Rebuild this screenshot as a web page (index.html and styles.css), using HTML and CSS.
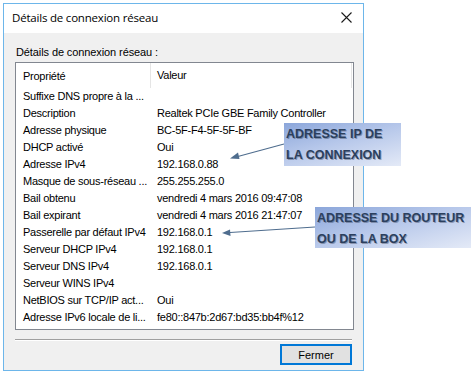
FILE: index.html
```html
<!DOCTYPE html>
<html lang="fr">
<head>
    <meta charset="UTF-8">
    <title>Détails de connexion réseau</title>
    <link rel="stylesheet" href="styles.css">
</head>
<body>

    <!-- Dialog window -->
    <div class="window">
        <div class="titlebar">
            <span class="title">Détails de connexion réseau</span>
            <svg class="close" width="11" height="11" viewBox="0 0 11 11">
                <path d="M0.5 0.5 L10.5 10.5 M10.5 0.5 L0.5 10.5" stroke="#1a1a1a" stroke-width="1.1" fill="none"/>
            </svg>
        </div>

        <div class="content">
            <div class="label">Détails de connexion réseau :</div>

            <div class="listview">
                <div class="head">
                    <div class="col1">Propriété</div>
                    <div class="col2">Valeur</div>
                    <div class="col3"></div>
                </div>
                <div class="row"><div class="col1">Suffixe DNS propre à la ...</div><div class="col2"></div></div>
                <div class="row"><div class="col1">Description</div><div class="col2">Realtek PCIe GBE Family Controller</div></div>
                <div class="row"><div class="col1">Adresse physique</div><div class="col2">BC-5F-F4-5F-5F-BF</div></div>
                <div class="row"><div class="col1">DHCP activé</div><div class="col2">Oui</div></div>
                <div class="row"><div class="col1">Adresse IPv4</div><div class="col2">192.168.0.88</div></div>
                <div class="row"><div class="col1">Masque de sous-réseau ...</div><div class="col2">255.255.255.0</div></div>
                <div class="row"><div class="col1">Bail obtenu</div><div class="col2">vendredi 4 mars 2016 09:47:08</div></div>
                <div class="row"><div class="col1">Bail expirant</div><div class="col2">vendredi 4 mars 2016 21:47:07</div></div>
                <div class="row"><div class="col1">Passerelle par défaut IPv4</div><div class="col2">192.168.0.1</div></div>
                <div class="row"><div class="col1">Serveur DHCP IPv4</div><div class="col2">192.168.0.1</div></div>
                <div class="row"><div class="col1">Serveur DNS IPv4</div><div class="col2">192.168.0.1</div></div>
                <div class="row"><div class="col1">Serveur WINS IPv4</div><div class="col2"></div></div>
                <div class="row"><div class="col1">NetBIOS sur TCP/IP act...</div><div class="col2">Oui</div></div>
                <div class="row"><div class="col1">Adresse IPv6 locale de li...</div><div class="col2">fe80::847b:2d67:bd35:bb4f%12</div></div>
            </div>

            <div class="separator"></div>

            <div class="buttons">
                <button class="btn">Fermer</button>
            </div>
        </div>
    </div>

    <!-- Annotation arrows -->
    <svg class="arrows" width="471" height="372" viewBox="0 0 471 372">
        <line x1="284" y1="144" x2="236" y2="157" stroke="#4f6d8e" stroke-width="1.2"/>
        <path d="M230 158.5 L238 152.5 L239.5 159 Z" fill="#4f6d8e"/>
        <line x1="315" y1="227" x2="230" y2="232.5" stroke="#4f6d8e" stroke-width="1.2"/>
        <path d="M222 233 L230 229.5 L230.5 236 Z" fill="#4f6d8e"/>
    </svg>

    <!-- Annotation labels -->
    <div class="callout callout-ip">ADRESSE IP DE<br>LA CONNEXION</div>
    <div class="callout callout-gw">ADRESSE DU ROUTEUR<br>OU DE LA BOX</div>

</body>
</html>
```

FILE: styles.css
```css
body {
    margin: 0;
    padding: 0;
    background: #ffffff;
    font-family: "Liberation Sans", Arial, sans-serif;
    font-size: 11px;
    letter-spacing: -0.25px;
    color: #000;
    position: relative;
    width: 471px;
    height: 372px;
    overflow: hidden;
}

/* Dialog window */
.window {
    margin: 3px 0 0 3px;
    width: 359px;
    height: 366px;
    border: 1px solid #6db6ea;
    display: flex;
    flex-direction: column;
    background: #f0f0f0;
}

.titlebar {
    height: 29px;
    background: #fff;
    display: flex;
    align-items: center;
    justify-content: space-between;
    padding: 0 11px 0 8px;
}
.title {
    font-family: "Open Sans", "Liberation Sans", sans-serif;
    font-size: 11.5px;
    letter-spacing: -0.2px;
    color: #000;
    margin-top: -2px;
}
.close {
    margin-top: -3px;
}

.content {
    flex: 1;
    padding: 0 10px 0 11px;
    display: flex;
    flex-direction: column;
}

.label {
    height: 29px;
    line-height: 14px;
    padding: 12px 0 0 1px;
    box-sizing: border-box;
    letter-spacing: -0.1px;
}

/* List view */
.listview {
    width: 337px;
    height: 266px;
    border: 1px solid #828790;
    background: #fff;
}
.head {
    height: 25px;
    display: flex;
    align-items: center;
}
.head .col2 {
    border-left: 1px solid #e5e5e5;
    height: 25px;
    line-height: 24px;
}
.head .col3 {
    flex: 1;
    border-right: 1px solid #e5e5e5;
    height: 25px;
    margin-right: 1px;
}
.row {
    height: 17px;
    line-height: 17px;
    display: flex;
    white-space: nowrap;
}
.col1 {
    width: 127px;
    padding-left: 7px;
    flex-shrink: 0;
}
.col2 {
    padding-left: 6px;
    width: 160px;
}
.row .col2 {
    padding-left: 7px;
}

.separator {
    margin-top: 9px;
    width: 337px;
    border-top: 1px solid #a0a0a0;
    border-bottom: 1px solid #fff;
}

.buttons {
    display: flex;
    justify-content: flex-end;
    padding-right: 1px;
    margin-top: 3px;
}
.btn {
    width: 72px;
    height: 21px;
    border: 2px solid #0078d7;
    background: #e1e1e1;
    font-family: "Liberation Sans", Arial, sans-serif;
    font-size: 11px;
    color: #000;
    padding: 0;
}

/* Annotations */
.arrows {
    position: absolute;
    top: 0;
    left: 0;
}
.callout {
    position: absolute;
    background: linear-gradient(165deg, #8ba6da 0%, #b6c7ea 45%, #e4eaf7 100%);
    color: #2b3f5e;
    font-family: "Liberation Sans", Arial, sans-serif;
    font-weight: bold;
    font-size: 12.5px;
    letter-spacing: 0;
    line-height: 21px;
    white-space: nowrap;
    text-shadow: 1px 1px 0 rgba(30, 40, 60, 0.35);
    padding: 1px 0 0 2px;
    box-sizing: border-box;
}
.callout-ip {
    left: 284px;
    top: 123px;
    width: 117px;
    height: 43px;
}
.callout-gw {
    left: 315px;
    top: 207px;
    width: 156px;
    height: 41px;
}
```
